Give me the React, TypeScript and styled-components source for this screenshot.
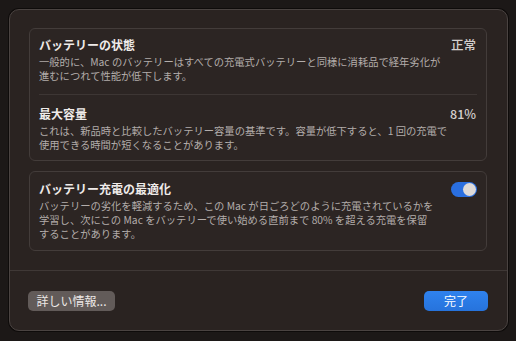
import { FC, useState } from 'react';
import styled, { createGlobalStyle } from 'styled-components';

const GlobalStyle = createGlobalStyle`
    html, body {
        margin: 0;
        padding: 0;
        background: #1c1817;
        font-family: "Noto Sans CJK JP", "Noto Sans", sans-serif;
    }
`;

const Page = styled.div`
    width: 516px;
    height: 341px;
    padding: 9px 8px 10px 9px;
    box-sizing: border-box;
    background: #1c1817;
`;

const Sheet = styled.div`
    width: 499px;
    height: 322px;
    box-sizing: border-box;
    background: #2a2321;
    border: 1px solid #4a4341;
    border-radius: 10px;
    box-shadow: 0 0 0 1px #0e0b0a;
    display: flex;
    flex-direction: column;
    overflow: hidden;
`;

const Content = styled.div`
    flex: 1;
    padding: 18px 20px 0 19px;
    display: flex;
    flex-direction: column;
    gap: 10px;
`;

const Group = styled.div`
    border: 1px solid #433c3a;
    border-radius: 6px;
    background: #2c2523;
    padding: 0 9px;
`;

const Row = styled.div<{ $top: number; $bottom: number }>`
    display: flex;
    justify-content: space-between;
    align-items: flex-start;
    padding: ${p => p.$top}px 0 ${p => p.$bottom}px;
`;

const Divider = styled.div`
    height: 1px;
    background: #3d3634;
`;

const Title = styled.div`
    font-size: 12px;
    line-height: 16px;
    font-weight: 700;
    color: #efebe9;
    margin-bottom: 2px;
`;

const Desc = styled.div`
    font-size: 10.3px;
    line-height: 14px;
    color: #b3adab;
    white-space: nowrap;
`;

const Value = styled.div`
    font-size: 12.5px;
    line-height: 16px;
    font-weight: 500;
    color: #d4cfcd;
    margin-right: 1px;
`;

const Toggle = styled.button<{ $on: boolean }>`
    position: relative;
    width: 26px;
    height: 15px;
    margin-top: 1px;
    border: none;
    border-radius: 8px;
    padding: 0;
    background: ${p => (p.$on ? '#2a6fe0' : '#4a4341')};
    cursor: pointer;
    flex-shrink: 0;

    &::after {
        content: '';
        position: absolute;
        top: 1px;
        left: ${p => (p.$on ? '12px' : '1px')};
        width: 13px;
        height: 13px;
        border-radius: 50%;
        background: #dedad8;
    }
`;

const Footer = styled.div`
    height: 58px;
    border-top: 1px solid #3f3836;
    display: flex;
    align-items: center;
    justify-content: space-between;
    padding: 1px 19px 0 18px;
`;

const Button = styled.button<{ $primary?: boolean }>`
    height: 20px;
    border: none;
    border-radius: 5px;
    padding: 0 8px;
    font-family: "Noto Sans CJK JP", "Noto Sans", sans-serif;
    font-size: 12px;
    line-height: 20px;
    color: ${p => (p.$primary ? '#ffffff' : '#ece8e6')};
    background: ${p => (p.$primary ? 'linear-gradient(#2f82ee, #2673dc)' : '#625b59')};
    min-width: ${p => (p.$primary ? '64px' : '87px')};
    cursor: pointer;
`;

export const App: FC = () => {
    const [optimized, setOptimized] = useState<boolean>(true);

    return (
        <Page>
            <GlobalStyle />
            <Sheet>
                <Content>
                    <Group>
                        <Row $top={8} $bottom={11}>
                            <div>
                                <Title>バッテリーの状態</Title>
                                <Desc>
                                    一般的に、Mac のバッテリーはすべての充電式バッテリーと同様に消耗品で経年劣化が<br />
                                    進むにつれて性能が低下します。
                                </Desc>
                            </div>
                            <Value>正常</Value>
                        </Row>
                        <Divider />
                        <Row $top={11} $bottom={8}>
                            <div>
                                <Title>最大容量</Title>
                                <Desc>
                                    これは、新品時と比較したバッテリー容量の基準です。容量が低下すると、1 回の充電で<br />
                                    使用できる時間が短くなることがあります。
                                </Desc>
                            </div>
                            <Value>81%</Value>
                        </Row>
                    </Group>
                    <Group>
                        <Row $top={9} $bottom={9}>
                            <div>
                                <Title>バッテリー充電の最適化</Title>
                                <Desc>
                                    バッテリーの劣化を軽減するため、この Mac が日ごろどのように充電されているかを<br />
                                    学習し、次にこの Mac をバッテリーで使い始める直前まで 80% を超える充電を保留<br />
                                    することがあります。
                                </Desc>
                            </div>
                            <Toggle $on={optimized} onClick={() => setOptimized(!optimized)} aria-label="バッテリー充電の最適化" />
                        </Row>
                    </Group>
                </Content>
                <Footer>
                    <Button>詳しい情報...</Button>
                    <Button $primary>完了</Button>
                </Footer>
            </Sheet>
        </Page>
    );
};

export default App;
